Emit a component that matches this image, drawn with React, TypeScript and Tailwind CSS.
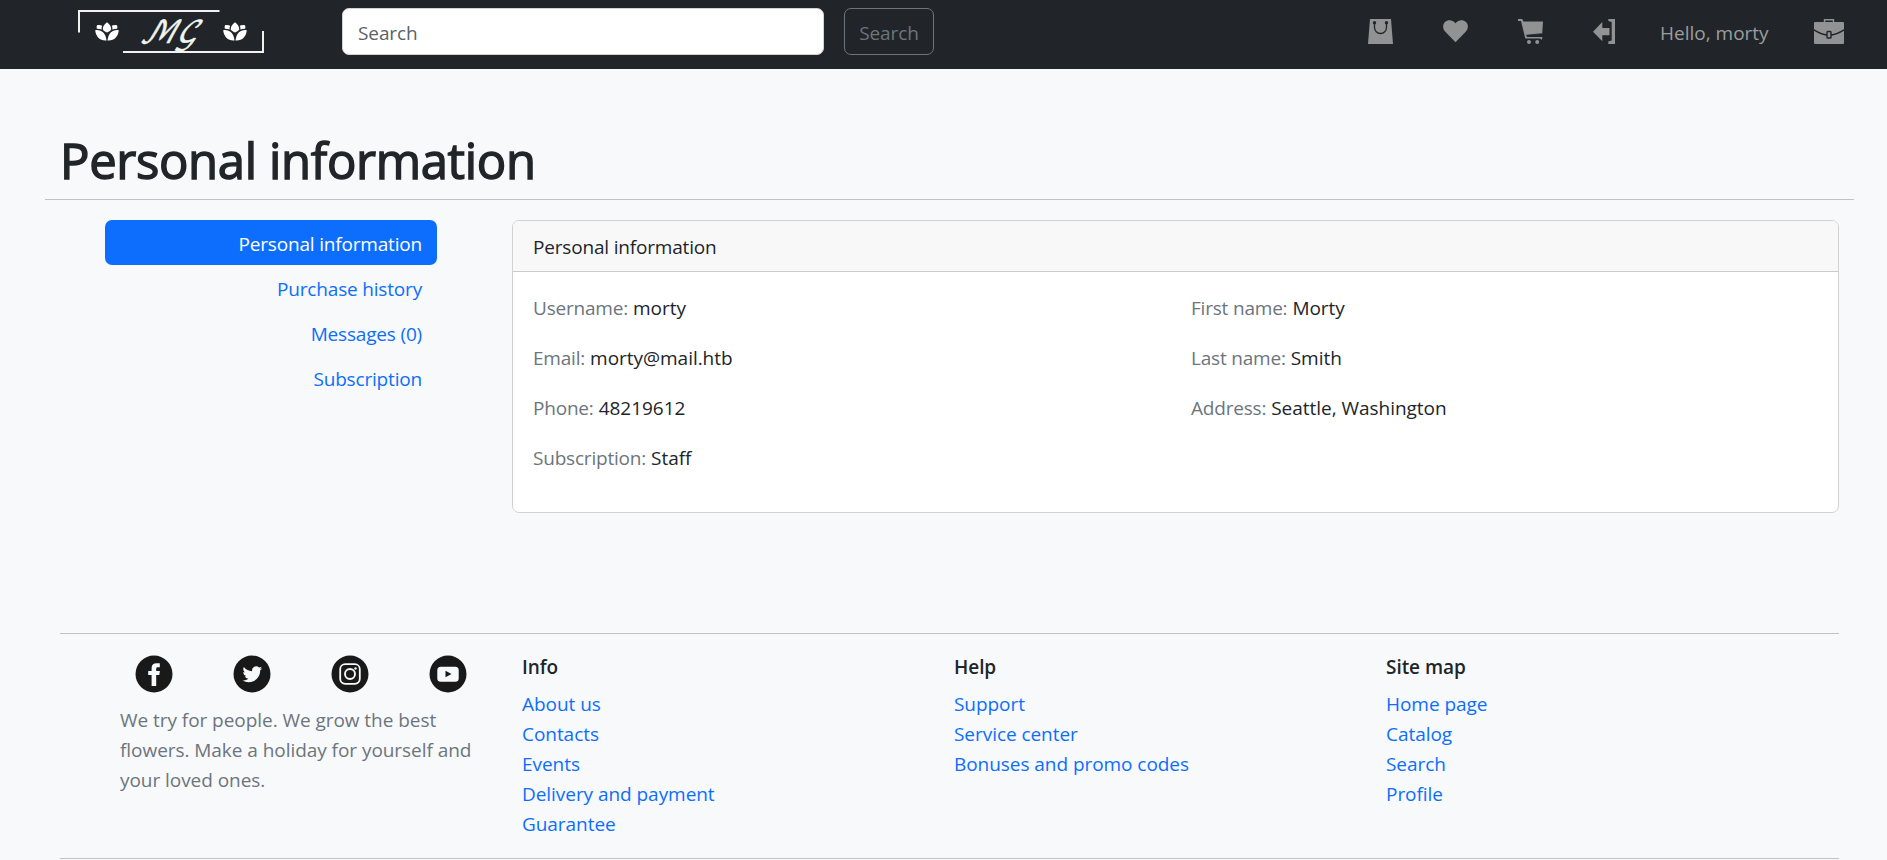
import type { ReactNode } from "react";

const details = [
  [
    { label: "Username", value: "morty" },
    { label: "Email", value: "morty@mail.htb" },
    { label: "Phone", value: "48219612" },
    { label: "Subscription", value: "Staff" },
  ],
  [
    { label: "First name", value: "Morty" },
    { label: "Last name", value: "Smith" },
    { label: "Address", value: "Seattle, Washington" },
  ],
];

const tabs = ["Personal information", "Purchase history", "Messages (0)", "Subscription"];

const footerColumns = [
  { title: "Info", links: ["About us", "Contacts", "Events", "Delivery and payment", "Guarantee"] },
  { title: "Help", links: ["Support", "Service center", "Bonuses and promo codes"] },
  { title: "Site map", links: ["Home page", "Catalog", "Search", "Profile"] },
];

function Lotus({ x }: { x: number }) {
  return (
    <g transform={`translate(${x} 22)`} fill="#fff">
      <path d="M12 0.3C15 2.6 16.4 5 16.2 7.4C15.4 8.9 13.6 9.8 12 10.6C10.4 9.8 8.6 8.9 7.8 7.4C7.6 5 9 2.6 12 0.3Z" />
      <path d="M2 3.2C4 2.7 5.8 2.9 7.2 3.8C6.6 5 6.4 6.2 6.7 7.6C4.8 6.9 3 6.5 1.8 6.7C1.5 5.5 1.5 4.3 2 3.2Z" />
      <path d="M22 3.2C20 2.7 18.2 2.9 16.8 3.8C17.4 5 17.6 6.2 17.3 7.6C19.2 6.9 21 6.5 22.2 6.7C22.5 5.5 22.5 4.3 22 3.2Z" />
      <path d="M0.2 8.2C5.8 7.2 10.6 10.6 11.5 18.4C5.4 19 0.8 15.2 0.2 8.2Z" />
      <path d="M23.8 8.2C18.2 7.2 13.4 10.6 12.5 18.4C18.6 19 23.2 15.2 23.8 8.2Z" />
    </g>
  );
}

function Logo() {
  return (
    <svg width="190" height="56" viewBox="0 0 190 56" className="shrink-0">
      <path d="M1 32.5V11H141.500" fill="none" stroke="#f1f1f1" strokeWidth="2" />
      <path d="M45 52H185V31" fill="none" stroke="#f1f1f1" strokeWidth="2" />
      <Lotus x={17} />
      <Lotus x={145} />
      <text
        transform="translate(61 42.500) skewX(-20)"
        fontSize="31"
        textLength="58"
        lengthAdjust="spacingAndGlyphs"
        fill="#f1f5f0"
        stroke="#f1f5f0"
        strokeWidth="0.500"
        fontFamily="'DejaVu Math TeX Gyre', 'DejaVu Serif', serif"
      >
        ℳ𝒢
      </text>
    </svg>
  );
}

function NavIcon({ width, children }: { width: number; children: ReactNode }) {
  return (
    <svg width={width} height="25" viewBox={`0 0 ${width} 25`} fill="#909294" className="shrink-0">
      {children}
    </svg>
  );
}

function Header() {
  return (
    <header className="flex h-[69px] items-start bg-[#212529] pl-[78px]">
      <Logo />
      <form className="ml-[74px] flex gap-[20px] pt-2">
        <input
          placeholder="Search"
          className="h-[47px] w-[482px] rounded-[7px] border border-[#ced4da] bg-white px-[15px] pt-[3px] tracking-[-0.1px] placeholder:text-[#5b6168]"
        />
        <button type="button" className="h-[47px] w-[90px] rounded-[7px] border border-[#6c757d] pt-[3px] tracking-[-0.1px] text-[#6c757d]">
          Search
        </button>
      </form>
      <nav className="mr-[43px] ml-auto flex items-start pt-[19px]">
        <NavIcon width={25}>
          <path d="M2 0H23L25 25H0Z" />
          <path d="M6.500 4V8.500A6 6 0 0 0 18.500 8.500V4" fill="none" stroke="#212529" strokeWidth="1.300" />
          <circle cx="6.500" cy="3.700" r="1.700" fill="#212529" />
          <circle cx="18.500" cy="3.700" r="1.700" fill="#212529" />
        </NavIcon>
        <div className="ml-[50px] flex">
          <NavIcon width={25}>
            <path d="M12.500 23.300L2.300 12.800C-0.600 9.800-0.500 5.400 2 3C5 0.200 9.800 0.700 12.500 4.300C15.200 0.700 20 0.200 23 3C25.500 5.400 25.600 9.800 22.700 12.800Z" />
          </NavIcon>
        </div>
        <div className="ml-[50px] flex">
          <NavIcon width={25}>
            <path d="M0 0H4.300L5.400 2.500H25L24.200 14.800L8.500 16.300L9 18H24.300V19.300L23.300 21L22.300 19.500H7.300L3 1.900H0Z" />
            <path d="M8.200 16.200L23.800 14.700" stroke="#212529" strokeWidth="0.800" />
            <circle cx="11" cy="23" r="2" />
            <circle cx="19.200" cy="23" r="2" />
          </NavIcon>
        </div>
        <div className="ml-[50px] flex">
          <NavIcon width={22}>
            <path d="M0 12.700L9.300 3V9H16.500V16.300H9.300V22.300Z" />
            <path d="M15.300 0H22V25H15.300V22.500L18.700 21.500V3L15.300 2Z" />
          </NavIcon>
        </div>
        <span className="-mt-[1px] ml-[45px] w-[109px] leading-[30px] whitespace-nowrap text-[#9b9d9e]">Hello, morty</span>
        <div className="ml-[45px] flex">
          <NavIcon width={30}>
            <path d="M10.500 3.500V0.800H19.500V3.500" fill="none" stroke="#909294" strokeWidth="1.400" />
            <rect y="3" width="30" height="22" rx="1" />
            <path d="M0 10.800Q15 21 30 10.800" fill="none" stroke="#212529" strokeWidth="1.500" />
            <rect x="13" y="12.500" width="4" height="6.500" rx="0.800" fill="#909294" stroke="#212529" strokeWidth="1.400" />
          </NavIcon>
        </div>
      </nav>
    </header>
  );
}

function SocialIcon({ children }: { children: ReactNode }) {
  return (
    <svg width="38" height="38" viewBox="0 0 38 38" fill="#f8f9fb">
      <circle cx="19" cy="19" r="18.500" fill="#191919" />
      {children}
    </svg>
  );
}

function Footer() {
  return (
    <footer className="mt-[120px] mr-[48px] ml-[60px] flex h-[226px] border-y border-[#c0c2c4] tracking-[-0.05px]">
      <div className="w-[462px] shrink-0 pt-[21px] pl-[60px]">
        <div className="flex gap-[60px] pl-[15px]">
          <SocialIcon>
            <path d="M16.600 31V20H13.200V16H16.600V13.300C16.600 10 18.300 8.300 21.600 8.300H24.800V12.300H22.700C21.500 12.300 21.200 12.900 21.200 14V16H24.900L24.300 20H21.200V31Z" />
          </SocialIcon>
          <SocialIcon>
            <path
              transform="translate(9.500 9.500) scale(0.820)"
              d="M23.950 4.570a10 10 0 0 1-2.820.77 4.960 4.960 0 0 0 2.160-2.720c-.95.55-2 .95-3.130 1.180a4.920 4.920 0 0 0-8.380 4.480C7.690 8.090 4.070 6.130 1.640 3.160a4.820 4.820 0 0 0-.67 2.480c0 1.710.87 3.210 2.190 4.100a4.900 4.900 0 0 1-2.230-.62v.06a4.920 4.920 0 0 0 3.950 4.830 5 5 0 0 1-2.210.09 4.940 4.940 0 0 0 4.600 3.420A9.870 9.870 0 0 1 0 19.540a13.990 13.990 0 0 0 7.550 2.210c9.050 0 14-7.500 14-13.980 0-.21 0-.42-.02-.63a9.940 9.940 0 0 0 2.460-2.550z"
            />
          </SocialIcon>
          <SocialIcon>
            <rect x="9.200" y="9.200" width="19.600" height="19.600" rx="5" fill="none" stroke="#f8f9fb" strokeWidth="1.800" />
            <circle cx="19" cy="19" r="5" fill="none" stroke="#f8f9fb" strokeWidth="1.900" />
            <circle cx="24.500" cy="13.500" r="1.200" />
          </SocialIcon>
          <SocialIcon>
            <rect x="8.300" y="11.800" width="21.400" height="15" rx="3.500" />
            <path d="M16.500 15.800V22.300L22.500 19.100Z" fill="#191919" />
          </SocialIcon>
        </div>
        <p className="mt-[12px] leading-[30px] whitespace-nowrap text-[#6c757d]">
          We try for people. We grow the best
          <br />
          flowers. Make a holiday for yourself and
          <br />
          your loved ones.
        </p>
      </div>
      {footerColumns.map((column) => (
        <div key={column.title} className="w-[432px] shrink-0 pt-[21px]">
          <h5 className="mb-[10px] leading-[24px] font-semibold text-[#212529]">{column.title}</h5>
          <ul>
            {column.links.map((link) => (
              <li key={link} className="h-[30px] leading-[30px]">
                <a href="#" className="text-[#0d6efd]">{link}</a>
              </li>
            ))}
          </ul>
        </div>
      ))}
    </footer>
  );
}

export default function App() {
  return (
    <div className="h-[860px] overflow-hidden bg-[#f8f9fb] font-['Open_Sans','Noto_Sans',sans-serif] text-[19px] text-[#212529]">
      <Header />
      <main>
        <h1 className="mr-[33px] ml-[45px] h-[131px] border-b border-[#c0c2c4] pt-[61px] pl-[15px] text-[49px] leading-[60px] font-normal tracking-[-0.35px] [-webkit-text-stroke:1.4px_#212529]">
          Personal information
        </h1>
        <div className="mr-[48px] ml-[105px] flex items-start pt-[20px]">
          <nav className="w-[332px] shrink-0 text-right tracking-[-0.18px]">
            {tabs.map((tab, i) => (
              <a
                key={tab}
                href="#"
                className={`block h-[45px] rounded-[7px] px-[15px] pt-[9px] leading-[30px] ${i === 0 ? "bg-[#0d6efd] text-white" : "text-[#0d6efd]"}`}
              >
                {tab}
              </a>
            ))}
          </nav>
          <section className="ml-[75px] flex-1 overflow-hidden rounded-[7px] border border-[#d0d2d4] bg-white">
            <h2 className="h-[51px] border-b border-[#cbcbcb] bg-[#f8f8f8] px-[20px] pt-[11px] leading-[30px] tracking-[-0.18px]">
              Personal information
            </h2>
            <div className="grid grid-cols-[658px_1fr] px-[20px] pt-[21px] pb-[19px]">
              {details.map((column, i) => (
                <dl key={i}>
                  {column.map(({ label, value }) => (
                    <div key={label} className="mb-[20px] flex gap-[5px] leading-[30px]">
                      <dt className="tracking-[-0.2px] text-[#6c757d]">{label}:</dt>
                      <dd className="tracking-[-0.03px]">{value}</dd>
                    </div>
                  ))}
                </dl>
              ))}
            </div>
          </section>
        </div>
      </main>
      <Footer />
    </div>
  );
}
